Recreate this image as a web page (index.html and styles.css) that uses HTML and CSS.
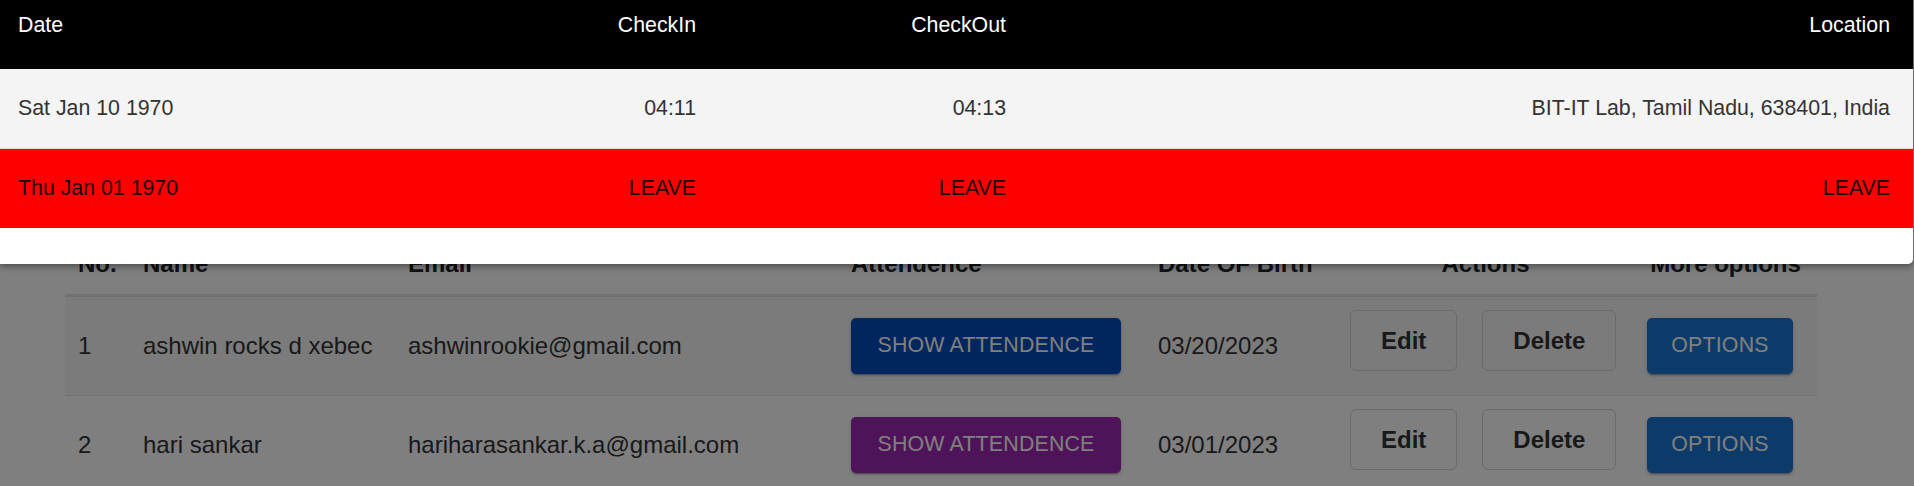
FILE: index.html
```html
<!DOCTYPE html>
<html lang="en">
<head>
<meta charset="utf-8">
<title>Users</title>
<link rel="stylesheet" href="styles.css">
</head>
<body>
<main class="page">
  <table class="users">
    <colgroup>
      <col class="c-no"><col class="c-name"><col class="c-email"><col class="c-att"><col class="c-dob"><col class="c-act"><col class="c-more">
    </colgroup>
    <thead>
      <tr>
        <th>No.</th>
        <th>Name</th>
        <th>Email</th>
        <th>Attendence</th>
        <th>Date OF Birth</th>
        <th class="center">Actions</th>
        <th class="center">More options</th>
      </tr>
    </thead>
    <tbody>
      <tr class="striped">
        <td>1</td>
        <td>ashwin rocks d xebec</td>
        <td>ashwinrookie@gmail.com</td>
        <td><button class="mui-btn show-blue">Show Attendence</button></td>
        <td>03/20/2023</td>
        <td><div class="actions"><button class="out-btn">Edit</button><button class="out-btn">Delete</button></div></td>
        <td><button class="mui-btn opt">Options</button></td>
      </tr>
      <tr>
        <td>2</td>
        <td>hari sankar</td>
        <td>hariharasankar.k.a@gmail.com</td>
        <td><button class="mui-btn show-purple">Show Attendence</button></td>
        <td>03/01/2023</td>
        <td><div class="actions"><button class="out-btn">Edit</button><button class="out-btn">Delete</button></div></td>
        <td><button class="mui-btn opt">Options</button></td>
      </tr>
    </tbody>
  </table>
</main>

<div class="backdrop"></div>

<div class="dialog">
  <table class="att">
    <colgroup>
      <col class="a-date"><col class="a-in"><col class="a-out"><col class="a-loc">
    </colgroup>
    <thead>
      <tr>
        <th>Date</th>
        <th class="right">CheckIn</th>
        <th class="right">CheckOut</th>
        <th class="right">Location</th>
      </tr>
    </thead>
    <tbody>
      <tr class="present">
        <td>Sat Jan 10 1970</td>
        <td class="right">04:11</td>
        <td class="right">04:13</td>
        <td class="right">BIT-IT Lab, Tamil Nadu, 638401, India</td>
      </tr>
      <tr class="leave">
        <td>Thu Jan 01 1970</td>
        <td class="right">LEAVE</td>
        <td class="right">LEAVE</td>
        <td class="right">LEAVE</td>
      </tr>
    </tbody>
  </table>
</div>
</body>
</html>
```

FILE: styles.css
```css
* { box-sizing: border-box; }

html, body {
  margin: 0;
  padding: 0;
  background: #ffffff;
  font-family: "Liberation Sans", Arial, sans-serif;
  color: #333333;
  overflow: hidden;
}

.page {
  padding: 234px 0 0 65px;
}

/* Underlying users table */
.users {
  width: 1752px;
  table-layout: fixed;
  border-collapse: separate;
  border-spacing: 0;
  font-size: 24px;
  line-height: 36px;
}

.c-no { width: 65px; }
.c-name { width: 265px; }
.c-email { width: 443px; }
.c-att { width: 307px; }
.c-dob { width: 192px; }
.c-act { width: 297px; }
.c-more { width: 183px; }

.users th {
  text-align: left;
  font-weight: bold;
  padding: 12px 13px;
  border-bottom: 3px solid #dee2e6;
  color: #212529;
  white-space: nowrap;
}

.users th.center { text-align: center; }

.users td {
  padding: 13px 13px 14px;
  vertical-align: middle;
  border-bottom: 1px solid #dee2e6;
  white-space: nowrap;
}

.users tr.striped { background: #f6f6f6; }

.mui-btn {
  display: inline-flex;
  align-items: center;
  justify-content: center;
  height: 56px;
  padding: 0 25px;
  border: 0;
  border-radius: 5px;
  font-family: "Liberation Sans", Arial, sans-serif;
  font-size: 21.33px;
  letter-spacing: 0.2px;
  text-transform: uppercase;
  color: #ffffff;
  box-shadow: 0 3px 1px -2px rgba(0,0,0,0.2), 0 2px 2px 0 rgba(0,0,0,0.14), 0 1px 5px 0 rgba(0,0,0,0.12);
  vertical-align: middle;
}

.show-blue { background: #004cbf; width: 270px; }
.show-purple { background: #9c27b0; width: 270px; }
.opt { background: #1976d2; width: 146px; padding: 0; }

.actions {
  display: flex;
  align-items: flex-start;
  gap: 25px;
  padding-bottom: 10px;
}

.out-btn {
  height: 61px;
  padding: 0 30px;
  border: 1px solid #d6d6d6;
  border-radius: 6px;
  background: transparent;
  font-family: "Liberation Sans", Arial, sans-serif;
  font-size: 24px;
  font-weight: bold;
  color: #333333;
}

/* Overlay */
.backdrop {
  position: fixed;
  inset: 0;
  background: rgba(0, 0, 0, 0.5);
}

/* Attendance dialog */
.dialog {
  position: fixed;
  top: 0;
  left: 0;
  width: 1913px;
  background: #ffffff;
  border-radius: 0 0 5px 0;
  padding-bottom: 36px;
  box-shadow: 0 3px 6px rgba(0, 0, 0, 0.35);
}

.att {
  width: 1913px;
  table-layout: fixed;
  border-collapse: separate;
  border-spacing: 0;
  font-size: 21.33px;
  line-height: 31px;
}

.a-date { width: 400px; }
.a-in { width: 319px; }
.a-out { width: 310px; }
.a-loc { width: 884px; }

.att th {
  background: #000000;
  color: #ffffff;
  font-weight: normal;
  text-align: left;
  padding: 10px 23px 28px 18px;
  white-space: nowrap;
}

.att td {
  padding: 24px 23px 24px 18px;
  white-space: nowrap;
}

.att .right { text-align: right; }

.att tr.present { background: #f4f4f4; color: #333333; }
.att tr.present td { border-bottom: 1px solid #e0e0e0; }
.att tr.leave { background: #ff0000; color: #1c0000; }
```
